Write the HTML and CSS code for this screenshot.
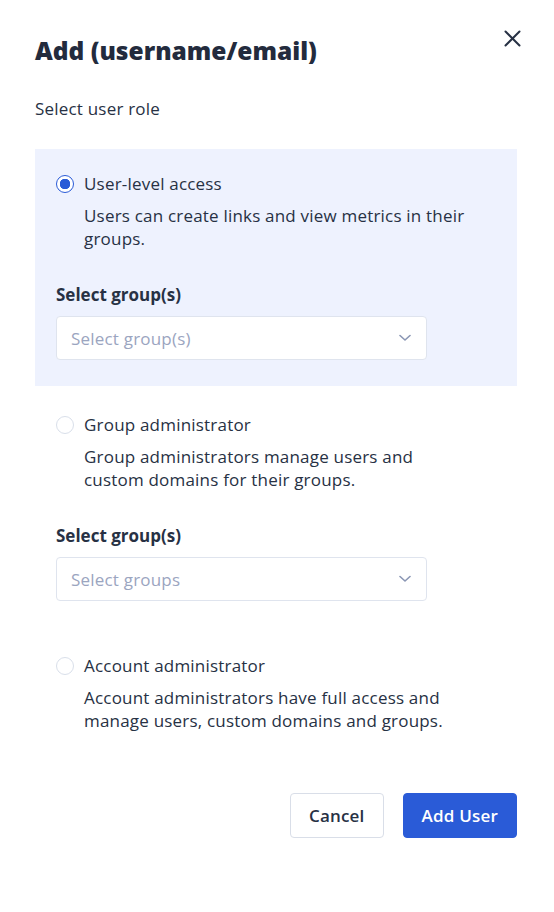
FILE: index.html
```html
<!DOCTYPE html>
<html lang="en">
<head>
<meta charset="utf-8">
<title>Add user</title>
<link rel="stylesheet" href="styles.css">
</head>
<body>
<div class="modal">
  <div class="header">
    <h1 class="title">Add (username/email)</h1>
    <button class="close" aria-label="Close">
      <svg width="17" height="17" viewBox="0 0 17 17"><path d="M1.5 1.5 L15.5 15.5 M15.5 1.5 L1.5 15.5" stroke="#273144" stroke-width="2" stroke-linecap="round" fill="none"/></svg>
    </button>
  </div>
  <p class="subtitle">Select user role</p>
  <div class="options">
    <div class="option selected">
      <div class="row"><span class="radio checked"></span><span class="label">User-level access</span></div>
      <p class="desc">Users can create links and view metrics in their groups.</p>
      <div class="field">
        <div class="field-label">Select group(s)</div>
        <div class="select"><span class="placeholder">Select group(s)</span>
          <svg width="12" height="8" viewBox="0 0 12 8"><path d="M1 1.5 L6 6 L11 1.5" stroke="#8a96b4" stroke-width="1.6" fill="none" stroke-linecap="round" stroke-linejoin="round"/></svg>
        </div>
      </div>
    </div>
    <div class="option">
      <div class="row"><span class="radio"></span><span class="label">Group administrator</span></div>
      <p class="desc">Group administrators manage users and custom domains for their groups.</p>
      <div class="field">
        <div class="field-label">Select group(s)</div>
        <div class="select"><span class="placeholder">Select groups</span>
          <svg width="12" height="8" viewBox="0 0 12 8"><path d="M1 1.5 L6 6 L11 1.5" stroke="#8a96b4" stroke-width="1.6" fill="none" stroke-linecap="round" stroke-linejoin="round"/></svg>
        </div>
      </div>
    </div>
    <div class="option">
      <div class="row"><span class="radio"></span><span class="label">Account administrator</span></div>
      <p class="desc">Account administrators have full access and manage users, custom domains and groups.</p>
    </div>
  </div>
  <div class="actions">
    <button class="btn btn-secondary">Cancel</button>
    <button class="btn btn-primary">Add User</button>
  </div>
</div>
</body>
</html>
```
FILE: styles.css
```css
* { box-sizing: border-box; }
html, body { margin: 0; padding: 0; background: #fff; }
body {
  font-family: "Open Sans", "Lato", sans-serif;
  color: #273144;
  font-size: 17px;
  letter-spacing: 0.2px;
}
.modal {
  padding: 25px 37px 40px 35px;
}
.header {
  display: flex;
  justify-content: space-between;
  align-items: flex-start;
}
.title {
  margin: 0;
  font-size: 24.5px;
  line-height: 52px;
  font-weight: 800;
  letter-spacing: 0;
  color: #232b3d;
}
.close {
  border: 0;
  background: none;
  padding: 0;
  margin: 5px -4px 0 0;
  width: 17px;
  height: 17px;
  display: flex;
  cursor: pointer;
}
.subtitle {
  margin: 20px 0 0;
  line-height: 24px;
}
.options {
  margin-top: 28px;
  display: flex;
  flex-direction: column;
  gap: 4px;
}
.option {
  padding: 23px 21px 26px;
}
.option.selected { background: #eef2fe; }
.row {
  display: flex;
  align-items: center;
  gap: 10px;
  line-height: 24px;
}
.radio {
  width: 18px;
  height: 18px;
  border-radius: 50%;
  border: 1px solid #d9dfea;
  background: #fff;
  flex: none;
}
.radio.checked {
  border: 1.5px solid #2a5bd7;
  background: radial-gradient(circle, #2a5bd7 0 5px, #fff 5.5px);
}
.desc {
  margin: 8px 0 0 28px;
  max-width: 384px;
  line-height: 23px;
}
.field { margin-top: 33px; }
.field-label {
  font-weight: 700;
  line-height: 24px;
  font-size: 17px;
  letter-spacing: 0;
}
.select {
  margin-top: 9px;
  width: 371px;
  height: 44px;
  border: 1px solid #dfe4ee;
  border-radius: 4px;
  background: #fff;
  display: flex;
  align-items: center;
  justify-content: space-between;
  padding: 0 15px 0 14px;
}
.placeholder { color: #9ba5bf; }
.actions {
  margin-top: 35px;
  display: flex;
  justify-content: flex-end;
  gap: 19px;
}
.btn {
  font-family: inherit;
  font-size: 17px;
  font-weight: 600;
  letter-spacing: 0.2px;
  height: 45px;
  border-radius: 4px;
  padding: 0 18px;
  cursor: pointer;
}
.btn-secondary {
  background: #fff;
  border: 1px solid #d9dee8;
  color: #273144;
}
.btn-primary {
  background: #2a5bd7;
  border: 1px solid #2a5bd7;
  color: #fff;
}
```
